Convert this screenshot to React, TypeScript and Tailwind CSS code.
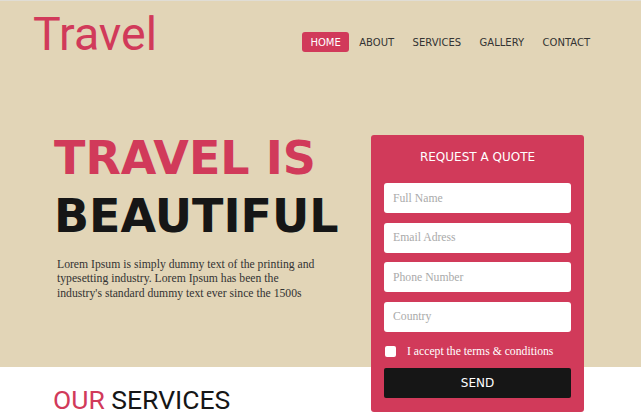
const fields = ['Full Name', 'Email Adress', 'Phone Number', 'Country'];
const links = ['HOME', 'ABOUT', 'SERVICES', 'GALLERY', 'CONTACT'];

const sans = "font-['DejaVu_Sans',sans-serif]";
const serif = "font-['Liberation_Serif',serif]";

const App = () => {
  return (
    <div className="w-[641px] h-[415px] overflow-hidden bg-white border-t border-[#e0ddd5]">
      <section className="bg-[#e2d5b7] h-[366px]">
        <header className="flex items-start justify-between pl-[33px] pr-[43px] pt-[10px]">
          <a className="font-['Roboto',sans-serif] text-[46.5px] leading-[46.5px] text-[#d13a5a]">Travel</a>
          <nav className={`flex gap-[2.5px] mt-[21px] ${sans}`}>
            {links.map((l, i) => (
              <a
                key={l}
                className={`px-2 h-[20px] flex items-center text-[10px] rounded-[3px] ${
                  i === 0 ? 'bg-[#d13a5a] text-white' : 'text-[#333]'
                }`}
              >
                {l}
              </a>
            ))}
          </nav>
        </header>

        <div className="flex items-start pl-[54px] pr-[57px] mt-[71.5px]">
          <div className="w-[300px]">
            <h1 className={`${sans} font-bold text-[46px] leading-[58px] text-[#161616]`}>
              <span className="text-[#d13a5a]">TRAVEL IS</span>
              <br />
              BEAUTIFUL
            </h1>
            <p className={`${serif} mt-[13px] pl-[3px] text-[11.7px] leading-[14.3px] text-[#333] w-[265px]`}>
              Lorem Ipsum is simply dummy text of the printing and typesetting industry. Lorem Ipsum has been the
              industry's standard dummy text ever since the 1500s
            </p>
          </div>

          <form className="relative z-10 ml-auto mt-[6px] w-[213px] bg-[#d13a5a] rounded-[3px] px-[13px] pt-[14px] pb-[14px]">
            <h2 className={`${sans} text-[12px] leading-4 text-white text-center`}>REQUEST A QUOTE</h2>
            <div className="flex flex-col gap-[9.5px] mt-[18px]">
              {fields.map((f) => (
                <input
                  key={f}
                  placeholder={f}
                  className={`${serif} h-[30px] w-full bg-white rounded-[3px] px-[9px] text-[11.7px] placeholder:text-[#aaa] outline-none`}
                />
              ))}
            </div>
            <label className={`${serif} flex items-center gap-[11px] mt-[14px] h-[12px] pl-[1px] text-[11.7px] text-white`}>
              <span className="w-[11px] h-[11px] bg-white rounded-[2px]" />
              I accept the terms &amp; conditions
            </label>
            <button
              type="button"
              className={`${sans} mt-[10px] w-full h-[30px] bg-[#161616] rounded-[2px] text-white text-[12px]`}
            >
              SEND
            </button>
          </form>
        </div>
      </section>

      <section className="pl-[53px] pt-[19px]">
        <h2 className="font-['Roboto',sans-serif] text-[26.5px] leading-[27px] text-[#161616]">
          <span className="text-[#d13a5a]">OUR</span> SERVICES
        </h2>
      </section>
    </div>
  );
};

export default App;
